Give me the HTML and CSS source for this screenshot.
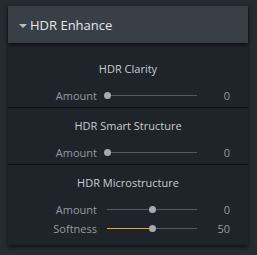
FILE: index.html
```html
<!DOCTYPE html>
<html>
<head>
<meta charset="utf-8">
<link rel="stylesheet" href="styles.css">
</head>
<body>
<div class="panel">
  <div class="header"><span class="caret"></span><span class="htitle">HDR Enhance</span></div>
  <div class="body">
    <div class="section first">
      <div class="stitle">HDR Clarity</div>
      <div class="row">
        <span class="label">Amount</span>
        <div class="slider"><div class="track"></div><div class="knob" style="left:0%"></div></div>
        <span class="value">0</span>
      </div>
    </div>
    <div class="section">
      <div class="stitle">HDR Smart Structure</div>
      <div class="row">
        <span class="label">Amount</span>
        <div class="slider"><div class="track"></div><div class="knob" style="left:0%"></div></div>
        <span class="value">0</span>
      </div>
    </div>
    <div class="section last">
      <div class="stitle">HDR Microstructure</div>
      <div class="row">
        <span class="label">Amount</span>
        <div class="slider"><div class="track"></div><div class="knob" style="left:50%"></div></div>
        <span class="value">0</span>
      </div>
      <div class="row">
        <span class="label">Softness</span>
        <div class="slider"><div class="track"></div><div class="fill" style="width:50%"></div><div class="knob" style="left:50%"></div></div>
        <span class="value">50</span>
      </div>
    </div>
  </div>
</div>
</body>
</html>
```
FILE: styles.css
```css
html, body {
  margin: 0;
  padding: 0;
  background: #262b32;
  width: 257px;
  height: 255px;
  overflow: hidden;
  font-family: "Open Sans", "Noto Sans", sans-serif;
}
.panel {
  margin: 6px 9px 0 8px;
  width: 240px;
  box-shadow: 0 2px 3px rgba(0,0,0,0.6);
  background: #1f232a;
}
.header {
  height: 37px;
  background: #393f47;
  display: flex;
  align-items: center;
  box-shadow: 0 2px 3px rgba(0,0,0,0.55);
  position: relative;
  z-index: 1;
}
.caret {
  width: 0;
  height: 0;
  margin-left: 11px;
  margin-right: 3px;
  border-left: 4px solid transparent;
  border-right: 4px solid transparent;
  border-top: 4px solid #b9bdc2;
  margin-top: 2px;
}
.htitle {
  color: #e6e8ea;
  font-size: 13px;
}
.section {
  border-bottom: 1px solid #0c0e11;
  padding: 10px 0 2px 0;
}
.section.first {
  padding-top: 18px;
}
.section.last {
  border-bottom: none;
  padding-bottom: 7px;
}
.stitle {
  text-align: center;
  color: #c9ccd0;
  font-size: 11px;
  height: 15px;
  line-height: 15px;
  margin-bottom: 10px;
}
.row {
  display: flex;
  align-items: center;
  height: 19px;
}
.label {
  width: 89px;
  text-align: right;
  color: #969ba2;
  font-size: 11px;
}
.slider {
  position: relative;
  margin-left: 10px;
  width: 90px;
  height: 7px;
}
.track {
  position: absolute;
  left: 0;
  right: 0;
  top: 3px;
  height: 1px;
  background: #555b63;
}
.fill {
  position: absolute;
  left: 0;
  top: 3px;
  height: 1px;
  background: #e8a93a;
}
.knob {
  position: absolute;
  top: 0;
  width: 7px;
  height: 7px;
  margin-left: -3px;
  border-radius: 50%;
  background: #a7abb0;
}
.value {
  width: 33px;
  text-align: right;
  color: #969ba2;
  font-size: 11px;
}
```
